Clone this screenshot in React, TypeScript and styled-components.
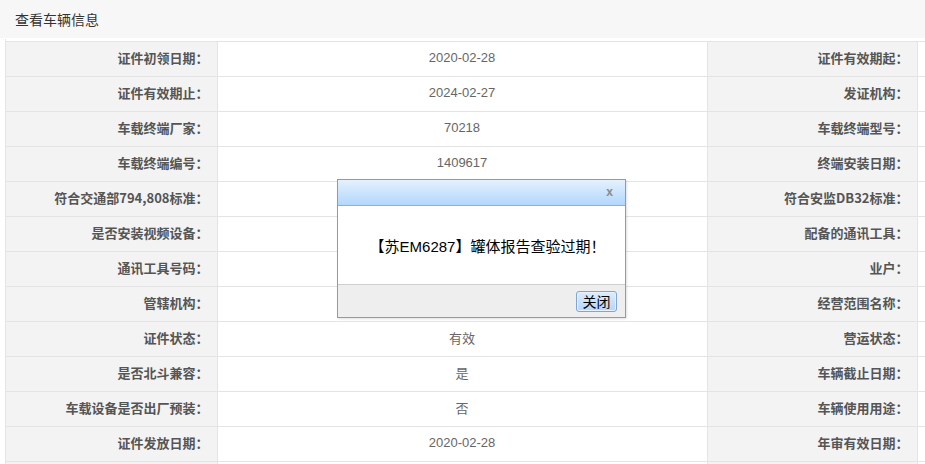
import React from "react";
import styled, { createGlobalStyle } from "styled-components";

const GlobalStyle = createGlobalStyle`
  html, body {
    margin: 0;
    padding: 0;
    background: #fff;
    overflow: hidden;
  }
  body {
    font-family: "Noto Sans CJK SC", "Liberation Sans", sans-serif;
  }
`;

const Page = styled.div`
  position: relative;
  width: 925px;
  height: 464px;
  overflow: hidden;
`;

const TitleBar = styled.div`
  height: 38px;
  background: #f7f7f7;
  display: flex;
  align-items: center;
  padding-left: 15px;
  font-size: 14px;
  color: #333;
`;

const Content = styled.div`
  margin: 1px 0 0 5px;
  padding-top: 2px;
  border-left: 1px solid #e4e4e4;
`;

const InfoTable = styled.table`
  border-collapse: collapse;
  table-layout: fixed;
  width: 1400px;
  font-size: 13px;
`;

const LabelCell = styled.td<{ $w: number }>`
  width: ${(p) => p.$w}px;
  height: 35px;
  padding: 0 8px 4px 0;
  box-sizing: border-box;
  background: #f3f3f3;
  border: 1px solid #e4e4e4;
  border-left: none;
  text-align: right;
  font-weight: bold;
  color: #555;
  white-space: nowrap;
`;

const ValueCell = styled.td<{ $w?: number }>`
  ${(p) => (p.$w ? `width: ${p.$w}px;` : "")}
  height: 35px;
  padding: 0 0 4px;
  box-sizing: border-box;
  background: #fff;
  border: 1px solid #e4e4e4;
  text-align: center;
  color: #666;
  font-family: "Liberation Sans", "Noto Sans CJK SC", sans-serif;
`;

const Dialog = styled.div`
  position: absolute;
  left: 337px;
  top: 179px;
  width: 287px;
  border: 1px solid #7d9fc3;
  background: #fff;
  box-shadow: 1px 1px 2px rgba(0, 0, 0, 0.12);
  display: flex;
  flex-direction: column;
`;

const DialogHead = styled.div`
  height: 25px;
  border-bottom: 1px solid #8cb2d9;
  background: linear-gradient(#e4f1fe, #b2d7fc);
  display: flex;
  align-items: center;
  justify-content: flex-end;
  padding-right: 12px;
`;

const CloseMark = styled.span`
  color: #8a8a8a;
  font-family: "Liberation Sans", sans-serif;
  font-weight: bold;
  font-size: 12px;
  line-height: 1;
  margin-bottom: 1px;
`;

const DialogBody = styled.div`
  height: 78px;
  padding-left: 12px;
  box-sizing: border-box;
  display: flex;
  align-items: center;
  justify-content: center;
  font-family: "Liberation Sans", "Noto Sans CJK SC", sans-serif;
  font-size: 15px;
  color: #000;
`;

const DialogFoot = styled.div`
  height: 32px;
  background: #eeeeee;
  border-top: 1px solid #cfcfcf;
  display: flex;
  align-items: center;
  justify-content: flex-end;
  padding-right: 8px;
`;

const CloseButton = styled.button`
  width: 41px;
  height: 21px;
  padding: 0;
  border: 1px solid #7fa5d2;
  border-radius: 3px;
  box-shadow: inset 0 0 0 1px #e8f2fd;
  background: linear-gradient(#dcecfe, #b6d6f8);
  font-family: "Noto Sans CJK SC", sans-serif;
  font-size: 14px;
  line-height: 17px;
  color: #000;
`;

type Row = [string, string, string, string];

const rows: Row[] = [
  ["证件初领日期：", "2020-02-28", "证件有效期起：", ""],
  ["证件有效期止：", "2024-02-27", "发证机构：", ""],
  ["车载终端厂家：", "70218", "车载终端型号：", ""],
  ["车载终端编号：", "1409617", "终端安装日期：", ""],
  ["符合交通部794,808标准：", "", "符合安监DB32标准：", ""],
  ["是否安装视频设备：", "", "配备的通讯工具：", ""],
  ["通讯工具号码：", "", "业户：", ""],
  ["管辖机构：", "", "经营范围名称：", ""],
  ["证件状态：", "有效", "营运状态：", ""],
  ["是否北斗兼容：", "是", "车辆截止日期：", ""],
  ["车载设备是否出厂预装：", "否", "车辆使用用途：", ""],
  ["证件发放日期：", "2020-02-28", "年审有效日期：", ""],
  ["", "", "", ""],
];

export default function App() {
  return (
    <Page>
      <GlobalStyle />
      <TitleBar>查看车辆信息</TitleBar>
      <Content>
        <InfoTable>
          <tbody>
            {rows.map((r, i) => (
              <tr key={i}>
                <LabelCell $w={211}>{r[0]}</LabelCell>
                <ValueCell $w={490}>{r[1]}</ValueCell>
                <LabelCell $w={210}>{r[2]}</LabelCell>
                <ValueCell>{r[3]}</ValueCell>
              </tr>
            ))}
          </tbody>
        </InfoTable>
      </Content>
      <Dialog>
        <DialogHead>
          <CloseMark>x</CloseMark>
        </DialogHead>
        <DialogBody>【苏EM6287】罐体报告查验过期！</DialogBody>
        <DialogFoot>
          <CloseButton>关闭</CloseButton>
        </DialogFoot>
      </Dialog>
    </Page>
  );
}
